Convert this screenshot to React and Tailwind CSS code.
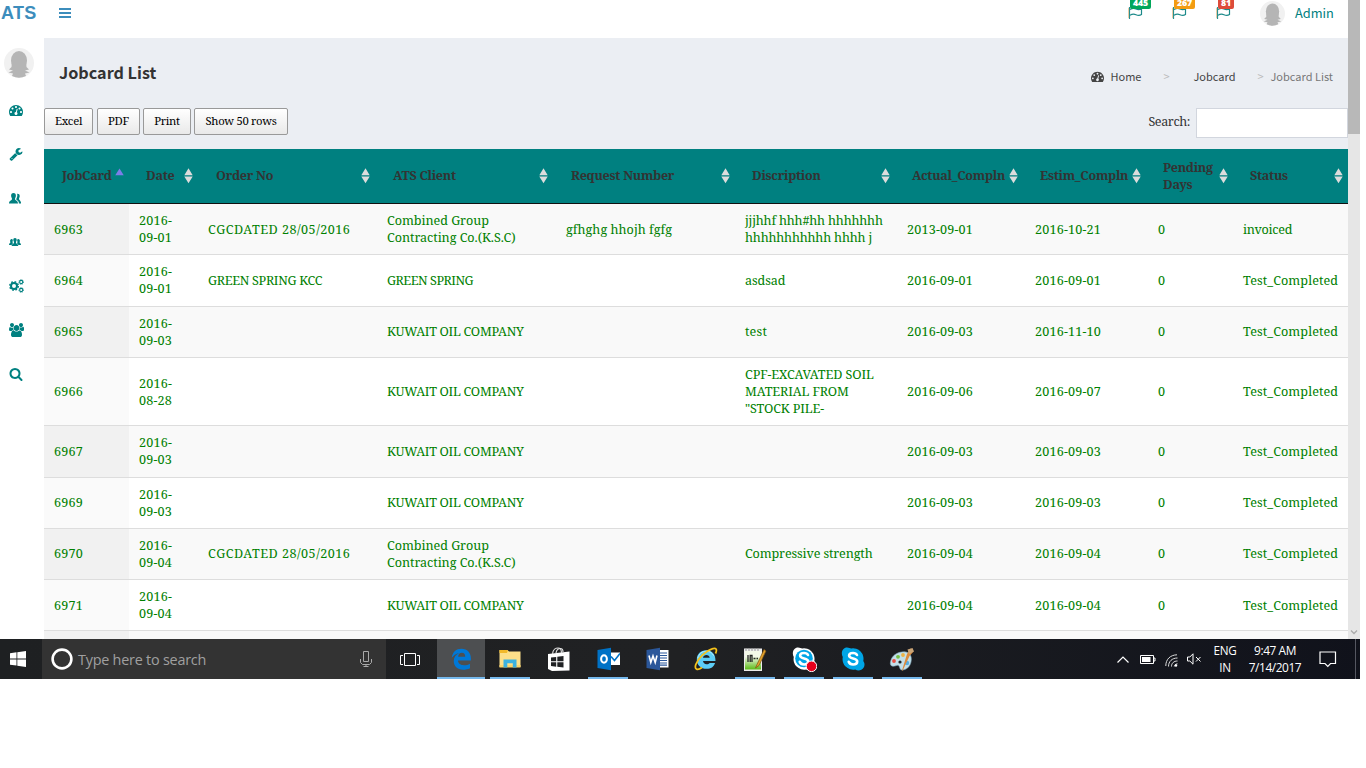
import React from "react";

const SANS = "font-['Noto_Sans_CJK_SC','Open_Sans',sans-serif]";
const SERIF = "font-['Droid_Serif','Noto_Serif','DejaVu_Serif_Condensed','DejaVu_Serif',serif]";
const SEGOE = "font-['Open_Sans','Noto_Sans',sans-serif]";
const COLS = "grid grid-cols-[85px_69px_179px_179px_179px_162px_128px_123px_85px_115px]";

const DASH =
  "M384 1152q0-53-37.5-90.5t-90.5-37.5-90.5 37.5-37.5 90.5 37.5 90.5 90.5 37.5 90.5-37.5 37.5-90.5zm192-448q0-53-37.5-90.5t-90.5-37.5-90.5 37.5-37.5 90.5 37.5 90.5 90.5 37.5 90.5-37.5 37.5-90.5zm428 481l101-382q6-26-7.5-48.5t-38.5-29.5-48 6.5-30 39.5l-101 382q-60 5-107 43.5t-63 98.5q-20 77 20 146t117 89 146-20 89-117q16-60-6-117t-72-91zm660-33q0-53-37.5-90.5t-90.5-37.5-90.5 37.5-37.5 90.5 37.5 90.5 90.5 37.5 90.5-37.5 37.5-90.5zm-640-640q0-53-37.5-90.5t-90.5-37.5-90.5 37.5-37.5 90.5 37.5 90.5 90.5 37.5 90.5-37.5 37.5-90.5zm448 192q0-53-37.5-90.5t-90.5-37.5-90.5 37.5-37.5 90.5 37.5 90.5 90.5 37.5 90.5-37.5 37.5-90.5zm320 448q0 261-141 483-19 29-54 29h-1402q-35 0-54-29-141-221-141-483 0-182 71-348t191-286 286-191 348-71 348 71 286 191 191 286 71 348z";
const WRENCH =
  "M448 1472q0-26-19-45t-45-19-45 19-19 45 19 45 45 19 45-19 19-45zm644-420l-682 682q-37 37-90 37-52 0-91-37l-106-108q-38-36-38-90 0-53 38-91l681-681q39 98 114.5 173.5t173.5 114.5zm634-435q0 39-23 106-47 134-164.5 217.5t-258.5 83.5q-185 0-316.5-131.5t-131.5-316.5 131.5-316.5 316.5-131.5q58 0 121.5 16.5t107.5 46.5q16 11 16 28t-16 28l-293 169v224l193 107q5-3 79-48.5t135.5-81 70.5-35.5q15 0 23.5 10t8.5 25z";
const USERS =
  "M593 896q-162 5-265 128h-134q-82 0-138-40.5t-56-118.5q0-353 124-353 6 0 43.5 21t97.5 42.5 119 21.5q67 0 133-23-5 37-5 66 0 159 93 287zm1071 637q0 120-73 189.5t-194 69.5h-874q-121 0-194-69.5t-73-189.5q0-53 3.5-103.5t14-109 26.5-108.5 43-97.5 62-81 85.5-53.5 111.5-20q10 0 43 21.5t73 48 107 48 135 21.5 135-21.5 107-48 73-48 43-21.5q61 0 111.5 20t85.5 53.5 62 81 43 97.5 26.5 108.5 14 109 3.5 103.5zm-1024-1277q0 106-75 181t-181 75-181-75-75-181 75-181 181-75 181 75 75 181zm704 384q0 159-112.5 271.5t-271.5 112.5-271.5-112.5-112.5-271.5 112.5-271.5 271.5-112.5 271.5 112.5 112.5 271.5zm576 225q0 78-56 118.5t-138 40.5h-134q-103-123-265-128 93-128 93-287 0-29-5-66 66 23 133 23 59 0 119-21.5t97.5-42.5 43.5-21q124 0 124 353zm-128-609q0 106-75 181t-181 75-181-75-75-181 75-181 181-75 181 75 75 181z";
const SEARCH =
  "M1216 832q0-185-131.5-316.5t-316.5-131.5-316.5 131.5-131.5 316.5 131.5 316.5 316.5 131.5 316.5-131.5 131.5-316.5zm512 832q0 52-38 90t-90 38q-54 0-90-38l-343-342q-179 124-399 124-143 0-273.5-55.5t-225-150-150-225-55.5-273.5 55.5-273.5 150-225 225-150 273.5-55.5 273.5 55.5 225 150 150 225 55.5 273.5q0 220-124 399l343 343q37 37 37 90z";

const Glyph = ({ d, w = 1792, className }) => (
  <svg viewBox={`0 0 ${w} 1792`} className={className} fill="currentColor"><path d={d} /></svg>
);

function Avatar({ className }) {
  return (
    <svg viewBox="0 0 30 30" className={className}>
      <circle cx="15" cy="15" r="15" fill="#f1f1f1" />
      <g fill="#b5b5b5">
        <ellipse cx="15" cy="12.5" rx="8" ry="9.5" />
        <path d="M8 12 7.5 19 5 21.5 9 22.5 4.500 24.500 9 25.500 8 28Q15 31.500 22 28L21 25.500 25.500 24.500 21 22.500 25 21.500 22.500 19 22 12z" />
      </g>
    </svg>
  );
}

function TwoPeople() {
  return (
    <svg viewBox="0 0 12 11" className="w-3 h-[11px]" fill="#008080">
      <path d="M4.500 0C6.200 0 7 1.200 6.900 3 6.800 4.300 6.100 5 6 5.800 6 7.800 9 7.300 9 10.500H0C0 7.300 3 7.800 3 5.800 2.900 5 2.200 4.300 2.100 3 2 1.200 2.800 0 4.500 0z" />
      <path d="M8 .8c1.800-.2 2.800.8 2.700 2.500 0 1-.6 1.700-.7 2.500 0 1.800 2.100 1.500 2.100 4.700H9.900c0-2.400-1-3-2.300-3.600-.5-.4-.3-1.200.1-1.800.6-1.400.9-3 .3-4.300z" />
    </svg>
  );
}

function ThreePeople() {
  return (
    <svg viewBox="0 0 12 9" className="w-3 h-[9px]" fill="#008080">
      <path d="M6 0c1.200 0 1.800.9 1.700 2.100-.1 1-.7 1.600-.7 2.300C7 5.900 9.300 5.700 9.300 8H2.700C2.700 5.700 5 5.900 5 4.400c0-.7-.6-1.300-.7-2.300C4.200.9 4.800 0 6 0z" />
      <path d="M2.500 1C3.500.9 4 1.700 3.800 2.600L3.500 4.300 4 5.300 2.500 7H0C0 5.100 1.500 5.300 1.400 4.300.8 3 1 1.200 2.500 1zM9.500 1C8.500.9 8 1.700 8.200 2.600L8.500 4.300 8 5.300 9.500 7H12C12 5.100 10.500 5.300 10.600 4.300 11.200 3 11 1.200 9.500 1z" />
    </svg>
  );
}

function Cogs() {
  return (
    <svg viewBox="0 0 15 14" className="w-[15px] h-[14px]" fill="none" stroke="#008080">
      <circle cx="5" cy="7" r="3" strokeWidth="2" />
      <circle cx="5" cy="7" r="4.300" strokeWidth="1.400" strokeDasharray="1.690 1.690" />
      <circle cx="12.200" cy="3" r="1.600" strokeWidth="1.100" />
      <circle cx="12.200" cy="3" r="2.400" strokeWidth=".8" strokeDasharray=".94 .94" />
      <circle cx="12.200" cy="11" r="1.600" strokeWidth="1.100" />
      <circle cx="12.200" cy="11" r="2.400" strokeWidth=".8" strokeDasharray=".94 .94" />
    </svg>
  );
}

function Flag({ count, color }) {
  return (
    <div className="relative w-5 h-[38px] shrink-0">
      <svg viewBox="0 0 16 13" className="absolute left-0 top-[7px] w-4 h-[13px]" fill="none">
        <path d="M1.500 0V12" stroke="#2a8f8f" strokeWidth="1.200" />
        <path d="M.5 1V11" stroke="#e8c090" strokeWidth=".8" />
        <path d="M2 2.500Q5.500.7 8 2T13.500 2V7.500Q11 9 8 7.700T2 8.300" stroke="#1c8a8a" strokeWidth="1.200" />
      </svg>
      <span className={`absolute left-[2px] top-0 h-[9px] px-[3px] rounded-b-[2px] text-[8.800px] leading-[7.500px] tracking-[-0.2px] font-extrabold text-white font-['Open_Sans',sans-serif] ${color}`}>{count}</span>
    </div>
  );
}

const headers = [
  ["JobCard", "pl-[18px] pr-[4px]", true],
  ["Date", "pl-[17px] pr-[4px]"],
  ["Order No", "pl-[18px] pr-[6px]"],
  ["ATS Client", "pl-[16px] pr-[7px]"],
  ["Request Number", "pl-[15px] pr-[4px]"],
  ["Discription", "pl-[17px] pr-[6px]"],
  ["Actual_Compln", "pl-[15px] pr-[6px]"],
  ["Estim_Compln", "pl-[15px] pr-[6px]"],
  ["Pending Days", "pl-[15px] pr-[4px]"],
  ["Status", "pl-[17px] pr-[4px]"],
];

function Sort({ active }) {
  if (active)
    return (
      <svg viewBox="0 0 10 16" className="w-[10px] h-4 shrink-0" fill="#7d7de8"><path d="M4.500 .5 8.700 7.300H.3z" /></svg>
    );
  return (
    <svg viewBox="0 0 10 16" className="w-[10px] h-4 shrink-0" fill="#dcdcdc"><path d="M4.500 .3 8.700 7.200H.3zM4.500 15.300 8.700 8.400H.3z" /></svg>
  );
}

const KOC = "KUWAIT OIL COMPANY";
const CG = "Combined Group\nContracting Co.(K.S.C)";
const rows = [
  ["h-[51px]", "6963", "2016-\n09-01", "CGCDATED 28/05/2016", CG, "gfhghg hhojh fgfg", "jjjhhf hhh#hh hhhhhhh\nhhhhhhhhhhh hhhh j", "2013-09-01", "2016-10-21", "0", "invoiced"],
  ["h-[52px]", "6964", "2016-\n09-01", "GREEN SPRING KCC", "GREEN SPRING", "", "asdsad", "2016-09-01", "2016-09-01", "0", "Test_Completed"],
  ["h-[51px]", "6965", "2016-\n09-03", "", KOC, "", "test", "2016-09-03", "2016-11-10", "0", "Test_Completed"],
  ["h-[68px]", "6966", "2016-\n08-28", "", KOC, "", "CPF-EXCAVATED SOIL\nMATERIAL FROM\n\"STOCK PILE-", "2016-09-06", "2016-09-07", "0", "Test_Completed"],
  ["h-[52px]", "6967", "2016-\n09-03", "", KOC, "", "", "2016-09-03", "2016-09-03", "0", "Test_Completed"],
  ["h-[51px]", "6969", "2016-\n09-03", "", KOC, "", "", "2016-09-03", "2016-09-03", "0", "Test_Completed"],
  ["h-[51px]", "6970", "2016-\n09-04", "CGCDATED 28/05/2016", CG, "", "Compressive strength", "2016-09-04", "2016-09-04", "0", "Test_Completed"],
  ["h-[51px]", "6971", "2016-\n09-04", "", KOC, "", "", "2016-09-04", "2016-09-04", "0", "Test_Completed"],
  ["h-[51px]", "", "", "", "", "", "", "", "", "", ""],
];

const tracking = {
  "CGCDATED 28/05/2016": "tracking-[0.49px]",
  "GREEN SPRING KCC": "tracking-[-0.3px]",
  "GREEN SPRING": "tracking-[-0.47px]",
  [KOC]: "tracking-[-0.3px]",
  [CG]: "tracking-[-0.04px]",
  "gfhghg hhojh fgfg": "tracking-[0.04px]",
  "jjjhhf hhh#hh hhhhhhh\nhhhhhhhhhhh hhhh j": "tracking-[-0.18px]",
  "invoiced": "tracking-[-0.28px]",
  "asdsad": "tracking-[-0.08px]",
  "Test_Completed": "tracking-[0.09px]",
  "Compressive strength": "tracking-[-0.13px]",
  "CPF-EXCAVATED SOIL\nMATERIAL FROM\n\"STOCK PILE-": "tracking-[-0.1px]",
};

function DataTable() {
  return (
    <div className={`${SERIF} text-[12.6px] leading-[17px]`}>
      <div className={`${COLS} h-[55px] bg-[#008080] border-b border-[#111] text-[#333] font-bold tracking-[-0.28px]`}>
        {headers.map(([label, pad, active]) => (
          <div key={label} className={`${pad} flex items-center justify-between pb-[1px]`}>
            <span className={label === "Pending Days" ? "w-[52px]" : "whitespace-nowrap"}>{label}</span>
            <Sort active={active} />
          </div>
        ))}
      </div>
      {rows.map(([h, ...cells], i) => (
        <div key={i} className={`${COLS} ${h} border-b border-[#ddd] text-[#008000] ${i % 2 ? "bg-white" : "bg-[#f9f9f9]"}`}>
          {cells.map((c, j) => (
            <div
              key={j}
              className={`flex items-center pl-[10px] whitespace-pre ${tracking[c] || "tracking-[0.18px]"} ${
                (i === 2 || i === 5 || i === 6) && !c.includes("\n") ? "pb-[2px]" : (i === 1 || i === 4) && j === 1 ? "pb-[2px]" : ""
              } ${j ? "" : i % 2 ? "bg-[#fafafa]" : "bg-[#f1f1f1]"}`}
            >
              {c}
            </div>
          ))}
        </div>
      ))}
    </div>
  );
}

function Button({ children, className }) {
  return (
    <button className={`${SERIF} ${className} h-[27px] pb-[2px] border border-[#999] rounded-[2px] bg-linear-to-b from-white to-[#e9e9e9] text-black text-[11.3px] leading-[16px] tracking-[-0.3px] whitespace-nowrap`}>
      {children}
    </button>
  );
}

function Skype({ busy }) {
  return (
    <svg viewBox="0 0 26 26" className="w-[26px] h-[26px]">
      <path d="M7 1.500c2 0 3 .8 4.200 1A10.500 10.500 0 0 1 23.300 15c.8 1.300 1.200 2.200 1.200 3.500a6 6 0 0 1-9.300 5A10.500 10.500 0 0 1 2.800 11C.3 6.500 3 1.500 7 1.500z" fill={busy ? "#fff" : "#00a5e6"} />
      {busy && <circle cx="13" cy="12.500" r="8.800" fill="#00a5e6" />}
      <path d="M17 9C16.300 7.600 14.900 7 13 7c-2.500 0-3.900 1-3.900 2.600 0 4 8.100 2 8.100 5.900 0 1.900-1.800 3-4.100 3-2.200 0-3.800-1-4.400-2.700" fill="none" stroke="#fff" strokeWidth="2.600" strokeLinecap="round" />
      {busy && <circle cx="20.500" cy="20.300" r="5.300" fill="#e8001c" stroke="#fff" strokeWidth="1" />}
    </svg>
  );
}

const apps = [
  ["edge",
    <svg viewBox="0 0 22 23" className="w-[21px] h-[22px]"><path d="M.8 10.200C1.600 4.200 5.500.8 11 .8c6.200 0 9.800 4.300 9.800 10v2.400H7.300c.2 3.400 3 4.900 6.300 4.900 2.400 0 4.500-.6 6.300-1.700v4.700c-2 1-4.500 1.600-7.300 1.600-6 0-9.700-3.500-9.700-9 0-4 2-7 5.700-8.600C5 6 2.500 7.600.8 10.200zM7.500 9.200h7.400c0-2.600-1.200-4.200-3.500-4.200S7.700 6.500 7.500 9.200z" fill="#0078d7" /></svg>, "w-12"],
  ["explorer",
    <svg viewBox="0 0 22 20" className="w-[22px] h-5"><path d="M.5 1h8l1.500 1.500h11.500V18H.5z" fill="#fde08a" /><path d="M.5 1h8.500l-1 3H.5z" fill="#f2b92b" /><path d="M.5 16h21v2.500H.5z" fill="#fbd56a" /><path d="M4.500 18.500v-8h13v8h-3.700v-4.200H8.300v4.200z" fill="#3bb2e0" /></svg>, "w-10"],
  ["store",
    <svg viewBox="0 0 22 25" className="w-[22px] h-[25px]"><path d="M0 7 21.500 4.500V23.500L4 24 0 22z" fill="#fff" /><path d="M4.500 7C5 2.500 8 1 10 1s3.500 1 3.500 5M8 6c.5-3 2.500-4.500 4.500-4.500S15 3 15 5" stroke="#ddd" strokeWidth="1.200" fill="none" /><path d="M3 10.500 8.200 9.900v4.300H3zM9.300 9.800l6.200-.8v5.200H9.300zM3 15.300h5.200v4.400L3 19.100zM9.300 15.300h6.200v5.100l-6.200-.6z" fill="#202224" /></svg>],
  ["outlook",
    <svg viewBox="0 0 23 24" className="w-[23px] h-6"><path d="M11 5.500h12V18H11z" fill="#fff" /><path d="m14 9.500 3.500 4L23 6.500" fill="none" stroke="#0072c6" strokeWidth="1.600" /><path d="M.5 3 14 .8v22.400L.5 21z" fill="#0072c6" /><ellipse cx="7" cy="12" rx="2.900" ry="3.700" fill="none" stroke="#fff" strokeWidth="2" /></svg>, "w-10"],
  ["word",
    <svg viewBox="0 0 23 24" className="w-[23px] h-6"><path d="M12 3h10.500v17.500H12z" fill="#fff" /><path d="M13 6h8M13 8.500h8M13 11h8M13 13.500h8M13 16h8M13 18.200h8" stroke="#2b579a" strokeWidth="1.200" /><path d="M.5 3 14 .8v22.400L.5 21z" fill="#2b579a" /><path d="m3 8.500 1.800 7L7 9l2.200 6.500 1.800-7" stroke="#fff" strokeWidth="1.600" fill="none" /></svg>],
  ["ie",
    <svg viewBox="0 0 24 24" className="w-6 h-6"><path d="M2.800 12.500C2.800 7 6.800 3.200 12.300 3.200c5.900 0 9.400 4.300 9.200 10.800H9c.2 2 1.600 3.200 3.700 3.200 1.300 0 2.300-.4 3-1.300h5.400c-1.200 3.900-4.200 5.900-8.400 5.900-5.900 0-9.900-3.700-9.900-9.300zM9 10.700h6.700C15.500 9 14.200 8 12.400 8S9.300 9 9 10.700z" fill="#5ccdf6" /><path d="M3.800 11.200C5 6.600 8 4.200 12.300 4.200c3.700 0 6.200 2 7.300 4.500" fill="none" stroke="#b7ebff" strokeWidth="1" /><path d="M21.500 6.500C23.500 2.300 22 .3 18 1.800 11.500 4 4 11 1.800 17.500.2 22.500 3.500 24 8 20.500" fill="none" stroke="#f5c21b" strokeWidth="1.800" /></svg>],
  ["notepad",
    <svg viewBox="0 0 24 25" className="w-6 h-[25px]"><defs><linearGradient id="np" x2="0" y2="1"><stop offset=".3" stopColor="#f3f8e8" /><stop offset="1" stopColor="#5bbb16" /></linearGradient></defs><path d="M1 1.500h18V24H1z" fill="#ececec" /><path d="M2 4h16v18.500H2z" fill="url(#np)" /><path d="M3 1v3M6 1v3M9 1v3M12 1v3M15 1v3" stroke="#999" /><path d="M5 8v7M7.200 15V8.500h1.800V15M10.500 11.500h2M13.500 11.500h1.500" stroke="#222" strokeWidth="1.300" fill="none" /><path d="M21 2.500 14 17.500l-1.500 3.500 3.500-2.500L23 4z" fill="#e2a12c" stroke="#7d5213" strokeWidth=".7" /></svg>, "w-10"],
  ["skypebiz", <Skype busy />, "w-10"],
  ["skype", <Skype />, "w-10"],
  ["paint",
    <svg viewBox="0 0 26 25" className="w-[26px] h-[25px]"><path d="M2 13C4 7 11 4 17 5c5 1 6 6 5 10-1 5-5 8-9 8-2 0-2-2-3-4s-4 1-7 0c-2-.5-2-3.500-1-6z" fill="#c2dfe9" stroke="#7fa6b8" strokeWidth=".6" /><circle cx="5" cy="14" r="1.900" fill="#e84f43" /><circle cx="9" cy="9.800" r="1.900" fill="#73c043" /><circle cx="14" cy="8" r="1.900" fill="#edb244" /><circle cx="18" cy="16" r="2.200" fill="#53aee4" /><circle cx="11" cy="15" r="1.600" fill="#202224" /><path d="M21.500 1.500 24.500 4.500 20.500 9 13.500 24 13 23.500 18 7z" fill="#dc8b3c" /><path d="m18.500 2.500 5-1.500L25 4.500l-5 2.500z" fill="#c9a477" /></svg>, "w-10"],
];

function Taskbar() {
  return (
    <footer className={`flex items-stretch w-[1360px] h-10 bg-linear-to-r from-[#1e2022] via-[#202123] to-[#10121b] text-white ${SEGOE}`}>
      <div className="w-[42px] flex items-center pl-[10px]">
        <svg viewBox="0 0 16 16" className="w-4 h-4" fill="#fff"><path d="M0 2.200 6.500 1.300v6.200H0zM7.300 1.200 16 0v7.500H7.300zM0 8.400h6.500v6.200L0 13.700zM7.300 8.400H16V16l-8.700-1.200z" /></svg>
      </div>
      <div className="w-[344px] bg-[#333] flex items-center pl-[9px] pr-[14px] justify-between">
        <div className="flex items-center gap-[5px]">
          <svg viewBox="0 0 22 22" className="w-[22px] h-[22px]"><circle cx="11" cy="11" r="9.400" fill="none" stroke="#fff" strokeWidth="2.600" /></svg>
          <span className="text-[14.400px] leading-[20px] text-[#a0a0a0] tracking-[-0.23px] pt-[2px]">Type here to search</span>
        </div>
        <svg viewBox="0 0 12 17" className="w-3 h-[17px]" fill="none" stroke="#aaa"><path d="M3.500.5h5v10h-5zM.5 8v3.500l2 2h7l2-2V8M6 13.500v2.500M3.500 15.500h5" /></svg>
      </div>
      <div className="w-[51px] flex items-center justify-center pr-[3px]">
        <svg viewBox="0 0 20 15" className="w-5 h-[15px]" fill="none" stroke="#fff"><path d="M4.500 1.500h11v12h-11zM3 3.500H.5v9H3M17 3.500h2.500v9H17" /></svg>
      </div>
      <div className="flex gap-px">
        {apps.map(([name, icon, bar], i) => (
          <div key={name} className={`w-12 h-10 flex flex-col items-center ${i === 0 ? "bg-[#4d4f51]" : ""}`}>
            <div className="flex-1 flex items-center pt-[2px]">{icon}</div>
            <div className={`h-[2px] ${bar ? `${bar} bg-[#76b9ed]` : "w-0"}`} />
          </div>
        ))}
      </div>
      <div className="flex-1" />
      <div className="flex items-center w-[244px]">
        <svg viewBox="0 0 12 7" className="w-3 h-[7px] ml-[1px]" fill="none" stroke="#fff" strokeWidth="1.200"><path d="m.5 6.500 5.500-5.500L11.500 6.500" /></svg>
        <svg viewBox="0 0 16 9" className="w-4 h-[9px] ml-[11px]"><path d="M.5.5h13v8H.5zM14 3h1v3H14" fill="none" stroke="#fff" /><path d="M2 2h8.500v5H2z" fill="#fff" /></svg>
        <svg viewBox="0 0 13 13" className="w-[13px] h-[13px] ml-[9px] mt-[2px]" fill="none" stroke="#ddd"><path d="M.8 12C.8 5.500 5 1 12 .8M3.500 12.500C3.500 7.500 7 4 12.500 4M6.500 12.500C6.500 9 9 7 12.500 7" /><path d="M9.300 12.500C9.300 11 10.500 10 12.500 9.800" /><circle cx="11" cy="11.500" r="1.200" fill="#fff" stroke="none" /></svg>
        <svg viewBox="0 0 15 12" className="w-[15px] h-3 ml-[9px]" fill="none" stroke="#fff"><path d="M.5 4h2.300L6 .8v10.400L2.800 8H.5zM9 4l4.500 4.500M13.500 4 9 8.500" /></svg>
        <div className="w-[36px] ml-[5px] text-center text-[11.700px] leading-[17px] tracking-[-0.2px]">ENG<br />IN</div>
        <div className="w-[64px] ml-0 text-center text-[11.900px] leading-[17px] tracking-[-0.42px] whitespace-nowrap">9:47 AM<br />7/14/2017</div>
        <svg viewBox="0 0 18 17" className="w-[18px] h-[17px] ml-[12px]" fill="none" stroke="#fff" strokeWidth="1.200"><path d="M1 1h15.500v11.500H11.500L8.800 15.300 6 12.500H1z" /></svg>
        <div className="ml-auto mr-[4px] w-px h-10 bg-[#555761]" />
      </div>
    </footer>
  );
}

export default function App() {
  return (
    <div className="w-[1366px] h-[768px] overflow-hidden bg-white flex flex-col">
      <div className="flex h-[639px] w-[1360px] shrink-0 overflow-hidden">
        <div className="w-[1348px] flex flex-col">
          <header className="h-[38px] shrink-0 flex items-start overflow-hidden">
            <span className="font-['Liberation_Sans',sans-serif] font-bold text-[18px] leading-[20px] tracking-[0.3px] text-[#3c8dbc] w-[59px] pl-[1px] pt-[3px]">ATS</span>
            <svg viewBox="0 0 12 10" className="w-3 h-[10px] mt-[8px]" fill="#3c8dbc"><path d="M0 0h12v2H0zM0 4h12v2H0zM0 8h12v2H0z" /></svg>
            <div className="flex ml-auto">
              <div className="flex gap-6">
                <Flag count="445" color="bg-[#00a65a]" />
                <Flag count="267" color="bg-[#f39c12]" />
                <Flag count="81" color="bg-[#dd4b39]" />
              </div>
              <Avatar className="w-[25px] h-[25px] ml-[24px] mt-[1px]" />
              <span className={`${SANS} text-[12.800px] leading-[20px] text-[#008080] w-[53px] ml-[10px] mt-[3px]`}>Admin</span>
            </div>
          </header>
          <div className="flex flex-1 min-h-0">
            <aside className="w-11 shrink-0 text-[#008080] flex flex-col items-start">
              <Avatar className="w-[30px] h-[30px] ml-[4px] mt-[10px]" />
              <nav className="flex flex-col mt-[10px] pl-[9px]">
                <div className="h-11 flex items-center"><Glyph d={DASH} className="w-[14px] h-[14px]" /></div>
                <div className="h-11 flex items-center"><Glyph d={WRENCH} className="w-[14px] h-[14px]" /></div>
                <div className="h-11 flex items-center"><TwoPeople /></div>
                <div className="h-11 flex items-center"><ThreePeople /></div>
                <div className="h-11 flex items-center"><Cogs /></div>
                <div className="h-11 flex items-center"><Glyph d={USERS} w={1920} className="w-[15px] h-[14px]" /></div>
                <div className="h-11 flex items-center"><Glyph d={SEARCH} className="w-[14px] h-[14px]" /></div>
              </nav>
            </aside>
            <main className="flex-1 min-w-0 bg-[#ebeef3] overflow-hidden">
              <div className={`${SANS} h-[70px] flex items-start justify-between pl-[15px] pr-[15px]`}>
                <h1 className="text-[16.200px] leading-[24px] font-bold text-[#333] mt-[22px]">Jobcard List</h1>
                <div className="flex items-center text-[11px] leading-[16px] text-[#444] mt-[30px]">
                  <Glyph d={DASH} className="w-[13px] h-[13px] mr-[6px]" />
                  <span className="w-[53px]">Home</span>
                  <span className="w-[30px] text-[#bbb]">&gt;</span>
                  <span className="w-[64px]">Jobcard</span>
                  <span className="w-[13px] text-[#bbb]">&gt;</span>
                  <span className="text-[#777]">Jobcard List</span>
                </div>
              </div>
              <div className="h-[41px] flex items-start justify-between">
                <div className="flex">
                  <Button className="w-[49px] mr-[4px]">Excel</Button>
                  <Button className="w-[43px] mr-[3px]">PDF</Button>
                  <Button className="w-[48px] mr-[3px]">Print</Button>
                  <Button className="w-[94px]">Show 50 rows</Button>
                </div>
                <label className={`${SERIF} flex items-center text-[12.600px] text-[#333]`}>
                  <span className="mr-[6px] mb-[1px] tracking-[-0.4px]">Search:</span>
                  <input className="w-[152px] h-[30px] bg-white border border-[#d2d6de]" />
                </label>
              </div>
              <DataTable />
            </main>
          </div>
        </div>
        <div className="w-3 bg-[#e6e6e6] flex flex-col justify-between items-center">
          <div className="w-3 h-[134px] bg-[#b8b8b8]" />
          <svg viewBox="0 0 8 5" className="w-2 h-[5px] mb-[4px]" fill="none" stroke="#aaa" strokeWidth="1.300"><path d="m1 .5 3 3 3-3" /></svg>
        </div>
      </div>
      <Taskbar />
    </div>
  );
}
